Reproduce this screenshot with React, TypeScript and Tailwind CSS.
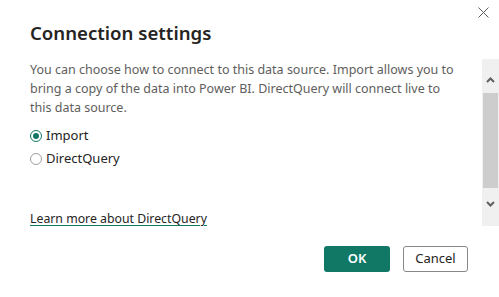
import React from "react";

function Radio({ checked, label }: { checked?: boolean; label: string }) {
  return (
    <label className="flex h-[23px] items-center gap-[4px]">
      <span
        className={
          checked
            ? "flex h-[12px] w-[12px] items-center justify-center rounded-full border border-[#117865]"
            : "h-[12px] w-[12px] rounded-full border border-[#a19f9d]"
        }
      >
        {checked && <span className="h-[6px] w-[6px] rounded-full bg-[#117865]" />}
      </span>
      <span className="text-[13px] text-[#252423]">{label}</span>
    </label>
  );
}

export default function App() {
  return (
    <div
      className="relative h-[297px] w-[499px] overflow-hidden bg-white"
      style={{ fontFamily: '"Noto Sans", "Open Sans", sans-serif' }}
    >
      <button className="absolute right-[10px] top-[6px] flex h-[12px] w-[12px] items-center justify-center text-[#605e5c]">
        <svg width="11" height="11" viewBox="0 0 11 11" fill="none" stroke="currentColor" strokeWidth="1">
          <path d="M0.5 0.5 L10.5 10.5 M10.5 0.5 L0.5 10.5" />
        </svg>
      </button>

      <div className="pl-[30px] pt-[19px]">
        <h1 className="h-[28px] text-[18.6px] font-semibold leading-[28px] text-[#252423]">Connection settings</h1>
      </div>

      <div className="mt-[12px] flex h-[167px]">
        <div className="flex-1 pl-[30px] pr-[24px] pt-[1px]">
          <p className="text-[12.5px] leading-[19px] text-[#605e5c]">
            You can choose how to connect to this data source. Import allows you to bring a copy of the data into Power
            BI. DirectQuery will connect live to this data source.
          </p>
          <div className="mt-[7px]">
            <Radio checked label="Import" />
            <Radio label="DirectQuery" />
          </div>
          <a
            href="#"
            className="mt-[39px] block w-fit text-[12.3px] leading-[19px] text-[#252423] underline decoration-[#117865] underline-offset-2"
          >
            Learn more about DirectQuery
          </a>
        </div>
        <div className="flex w-[17px] flex-col items-center bg-[#f0f0f0]">
          <div className="flex h-[34px] items-center justify-center pt-[8px]">
            <svg width="9" height="6" viewBox="0 0 9 6" fill="none" stroke="#606060" strokeWidth="2">
              <path d="M1 5 L4.5 1.5 L8 5" />
            </svg>
          </div>
          <div className="h-[95px] w-[15px] bg-[#cdcdcd]" />
          <div className="flex h-[38px] items-center justify-center pb-[6px]">
            <svg width="9" height="6" viewBox="0 0 9 6" fill="none" stroke="#606060" strokeWidth="2">
              <path d="M1 1 L4.5 4.5 L8 1" />
            </svg>
          </div>
        </div>
      </div>

      <div className="mt-[20px] flex justify-end gap-[13px] pr-[31px]">
        <button className="h-[26px] w-[66px] rounded-[3px] bg-[#117865] text-[13px] font-semibold text-white">OK</button>
        <button className="h-[26px] w-[65px] rounded-[3px] border border-[#8a8886] bg-white text-[13px] text-[#252423]">
          Cancel
        </button>
      </div>
    </div>
  );
}
